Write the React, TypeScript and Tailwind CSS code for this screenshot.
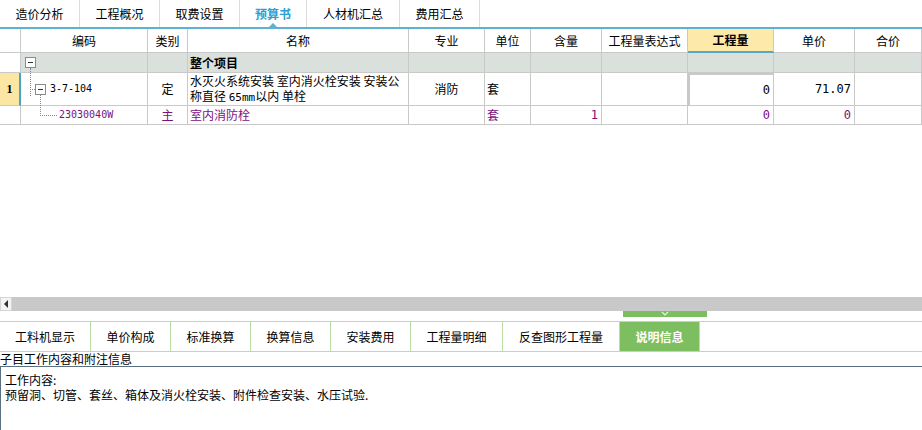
import React from 'react';

const font = { fontFamily: '"Noto Sans CJK SC", "Liberation Sans", sans-serif' };

const topTabs = [
  { label: '造价分析', w: 'w-[80px]' },
  { label: '工程概况', w: 'w-[80px]' },
  { label: '取费设置', w: 'w-[80px]' },
  { label: '预算书', w: 'w-[67px]', active: true },
  { label: '人材机汇总', w: 'w-[93px]' },
  { label: '费用汇总', w: 'w-[80px]' },
];

const bottomTabs = [
  { label: '工料机显示', w: 'w-[91px]' },
  { label: '单价构成', w: 'w-[80px]' },
  { label: '标准换算', w: 'w-[80px]' },
  { label: '换算信息', w: 'w-[80px]' },
  { label: '安装费用', w: 'w-[80px]' },
  { label: '工程量明细', w: 'w-[92px]' },
  { label: '反查图形工程量', w: 'w-[117px]' },
  { label: '说明信息', w: 'w-[80px]', active: true },
];

const headers = ['', '编码', '类别', '名称', '专业', '单位', '含量', '工程量表达式', '工程量', '单价', '合价'];

const cols = 'grid grid-cols-[21px_127px_40px_221px_76px_46px_71px_86px_86px_81px_1fr]';
const cell = 'border-r border-b border-[#c9c9c9] flex items-center text-[12px] leading-[14px]';
const mono = { fontFamily: '"DejaVu Sans Mono", "Liberation Mono", monospace' };

const TreeBox = () => (
  <span className="w-[11px] h-[11px] border border-[#8a8a8a] bg-white flex items-center justify-center shrink-0">
    <span className="w-[5px] h-px bg-[#333]" />
  </span>
);

export default function App() {
  return (
    <div className="w-[922px] h-[430px] bg-white flex flex-col overflow-hidden text-black" style={font}>
      {/* top tabs */}
      <div className="h-[29px] flex border-b-2 border-[#5db2d4] shrink-0">
        {topTabs.map((t) => (
          <div
            key={t.label}
            className={`${t.w} relative border-r border-[#dcdcdc] flex items-center justify-center text-[12px] ${
              t.active ? 'text-[#2c9fd5] font-bold' : ''
            }`}
          >
            {t.label}
            {t.active && (
              <span className="absolute bottom-[-1px] left-1/2 -translate-x-1/2 w-0 h-0 border-l-[5px] border-r-[5px] border-b-[5px] border-l-transparent border-r-transparent border-b-[#5db2d4]" />
            )}
          </div>
        ))}
      </div>

      {/* grid */}
      <div className="h-[268px] shrink-0 flex flex-col">
        <div className={`${cols} h-[24px]`}>
          {headers.map((h, i) => (
            <div
              key={i}
              className={`${cell} justify-center ${
                h === '工程量' ? 'bg-[#fde9aa] font-bold border-b-2 border-b-[#5aa6c2]' : 'bg-white'
              }`}
            >
              {h}
            </div>
          ))}
        </div>

        {/* group row */}
        <div className={`${cols} h-[20px] bg-[#dae0dc]`}>
          <div className={`${cell} bg-white`} />
          <div className={`${cell} pl-[4px] relative`}>
            <TreeBox />
            <span className="absolute left-[9px] top-[15px] h-[28px] border-l border-dotted border-[#888]" />
          </div>
          <div className={cell} />
          <div className={`${cell} pl-[2px] font-bold`}>整个项目</div>
          {Array.from({ length: 7 }).map((_, i) => (
            <div key={i} className={cell} />
          ))}
        </div>

        {/* row 1 */}
        <div className={`${cols} h-[33px]`}>
          <div
            className={`${cell} justify-center bg-[#fbe6a3] border-r-2 border-r-[#4aa3c8] font-bold`}
            style={{ fontFamily: '"Liberation Serif", serif' }}
          >
            1
          </div>
          <div className={`${cell} pl-[14px] relative`}>
            <span className="absolute left-[9px] top-[16px] w-[5px] border-t border-dotted border-[#888]" />
            <TreeBox />
            <span className="ml-[4px] text-[10px]" style={mono}>3-7-104</span>
            <span className="absolute left-[19px] top-[22px] h-[21px] border-l border-dotted border-[#888]" />
          </div>
          <div className={`${cell} justify-center`}>定</div>
          <div className={`${cell} pl-[2px]`}>
            <p className="leading-[15px]">
              水灭火系统安装 室内消火栓安装 安装公称直径 <span className="text-[11px]" style={mono}>65mm</span>以内 单栓
            </p>
          </div>
          <div className={`${cell} justify-center`}>消防</div>
          <div className={`${cell} pl-[2px]`}>套</div>
          <div className={cell} />
          <div className={cell} />
          <div className={`${cell} justify-end pr-[3px] text-[10px] border-2 border-[#7f7f7f]`} style={mono}>
            0
          </div>
          <div className={`${cell} justify-end pr-[3px] text-[10px]`} style={mono}>
            71.07
          </div>
          <div className={cell} />
        </div>

        {/* row 2 */}
        <div className={`${cols} h-[19px] text-[#7d0f7d]`}>
          <div className={cell} />
          <div className={`${cell} relative pl-[38px]`}>
            <span className="absolute left-[19px] top-[9px] w-[17px] border-t border-dotted border-[#888]" />
            <span className="text-[10px]" style={mono}>23030040W</span>
          </div>
          <div className={`${cell} justify-center`}>主</div>
          <div className={`${cell} pl-[2px]`}>室内消防栓</div>
          <div className={cell} />
          <div className={`${cell} pl-[2px]`}>套</div>
          <div className={`${cell} justify-end pr-[3px] text-[10px]`} style={mono}>1</div>
          <div className={cell} />
          <div className={`${cell} justify-end pr-[3px] text-[10px]`} style={mono}>0</div>
          <div className={`${cell} justify-end pr-[3px] text-[10px]`} style={mono}>0</div>
          <div className={cell} />
        </div>
      </div>

      {/* scrollbar */}
      <div className="h-[14px] bg-[#c9c9c9] flex shrink-0">
        <div className="w-[12px] h-full bg-[#f4f4f4] border border-[#d5d5d5] flex items-center justify-center">
          <span className="w-0 h-0 border-t-[4px] border-b-[4px] border-r-[4px] border-t-transparent border-b-transparent border-r-[#333]" />
        </div>
      </div>

      {/* handle strip */}
      <div className="h-[10px] shrink-0 flex">
        <div className="w-[623px]" />
        <div className="w-[84px] h-[6px] bg-[#7dbe60] flex justify-center">
          <svg width="10" height="6" viewBox="0 0 10 6">
            <path d="M2 1 L5 4 L8 1" stroke="#e6f3df" strokeWidth="1.2" fill="none" />
          </svg>
        </div>
      </div>

      {/* bottom tabs */}
      <div className="h-[31px] flex border-t border-b border-[#bcdca6] shrink-0">
        {bottomTabs.map((t) => (
          <div
            key={t.label}
            className={`${t.w} flex items-center justify-center text-[12px] border-r border-[#bcdca6] ${
              t.active ? 'bg-[#7dbe60] text-white font-bold' : ''
            }`}
          >
            {t.label}
          </div>
        ))}
      </div>

      {/* label */}
      <div className="h-[14px] text-[12px] leading-[14px] shrink-0">子目工作内容和附注信息</div>

      {/* text box */}
      <div className="flex-1 border-t border-l border-[#5a6f80] px-[4px] pt-[5px] text-[12px] leading-[15px] bg-white">
        <div>工作内容:</div>
        <div>预留洞、切管、套丝、箱体及消火栓安装、附件检查安装、水压试验.</div>
      </div>
    </div>
  );
}
